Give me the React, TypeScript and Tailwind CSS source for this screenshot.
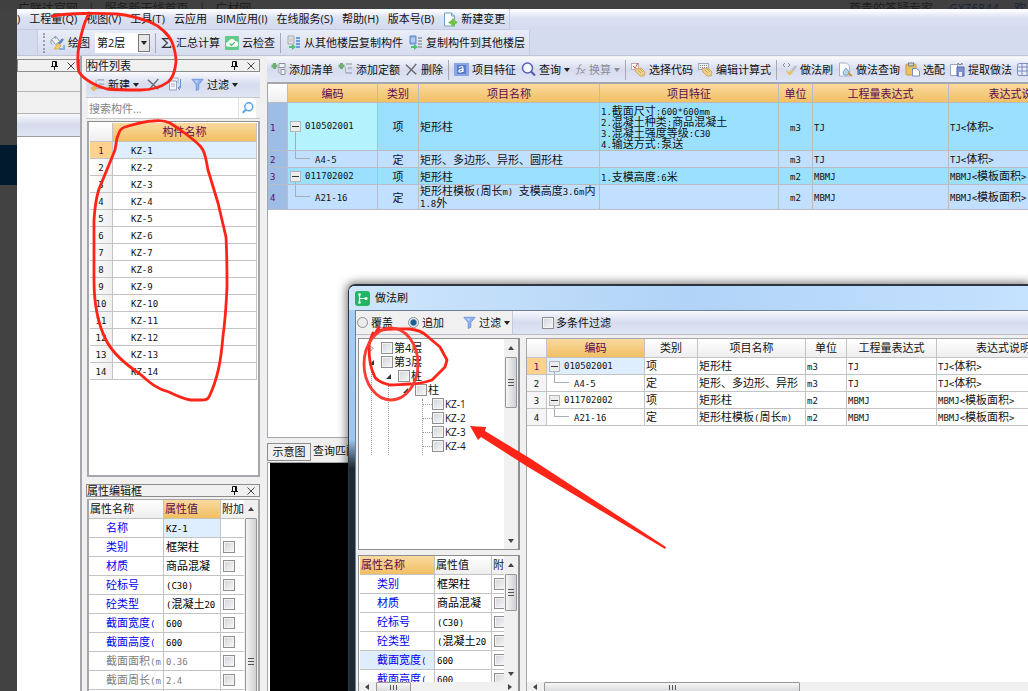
import { Fragment, type ReactNode } from "react";
import clsx from "clsx";

const KZ_ROWS = Array.from({ length: 14 }, (_, i) => `KZ-${i + 1}`);

interface Item {
  no: number;
  code: string;
  kind: string;
  name: string;
  shortName: string;
  feature: string[];
  unit: string;
  expr: string;
  note: string;
  parent: boolean;
}

const ITEMS: Item[] = [
  {
    no: 1,
    code: "010502001",
    kind: "项",
    name: "矩形柱",
    shortName: "矩形柱",
    feature: ["1.截面尺寸:600*600mm", "2.混凝土种类:商品混凝土", "3.混凝土强度等级:C30", "4.输送方式:泵送"],
    unit: "m3",
    expr: "TJ",
    note: "TJ<体积>",
    parent: true,
  },
  {
    no: 2,
    code: "A4-5",
    kind: "定",
    name: "矩形、多边形、异形、圆形柱",
    shortName: "矩形、多边形、异形",
    feature: [],
    unit: "m3",
    expr: "TJ",
    note: "TJ<体积>",
    parent: false,
  },
  {
    no: 3,
    code: "011702002",
    kind: "项",
    name: "矩形柱",
    shortName: "矩形柱",
    feature: ["1.支模高度:6米"],
    unit: "m2",
    expr: "MBMJ",
    note: "MBMJ<模板面积>",
    parent: true,
  },
  {
    no: 4,
    code: "A21-16",
    kind: "定",
    name: "矩形柱模板(周长m) 支模高度3.6m内1.8外",
    shortName: "矩形柱模板(周长m)",
    feature: [],
    unit: "m2",
    expr: "MBMJ",
    note: "MBMJ<模板面积>",
    parent: false,
  },
];

const PROPS = [
  { label: "名称", value: "KZ-1", own: true },
  { label: "类别", value: "框架柱", own: true },
  { label: "材质", value: "商品混凝", own: true },
  { label: "砼标号", value: "(C30)", own: true },
  { label: "砼类型", value: "(混凝土20", own: true },
  { label: "截面宽度(", value: "600", own: true },
  { label: "截面高度(", value: "600", own: true },
  { label: "截面面积(m", value: "0.36", own: false },
  { label: "截面周长(m", value: "2.4", own: false },
];

const TREE = [
  { label: "第4层", level: 0, state: "closed" },
  { label: "第3层", level: 0, state: "open" },
  { label: "柱", level: 1, state: "open" },
  { label: "柱", level: 2, state: "open" },
  { label: "KZ-1", level: 3, state: "leaf" },
  { label: "KZ-2", level: 3, state: "leaf" },
  { label: "KZ-3", level: 3, state: "leaf" },
  { label: "KZ-4", level: 3, state: "leaf" },
];

const ORANGE = "bg-linear-to-b from-[#f9d99e] to-[#f1bf62] text-[#5c0a52]";
const GREY_HEAD = "bg-linear-to-b from-white to-[#eeeeee] text-[#111111]";
const BAR = "bg-linear-to-b from-[#f8f9fd] via-[#d6dcee] to-[#e0e5f4]";

// half-width characters sit in a mono face, the Chinese ones in the UI face
function Mixed({ text }: { text: string }) {
  return (
    <>
      {text.split(/([\x20-\x7e]+)/).map((part, i) =>
        i % 2 ? (
          <span key={i} className="font-['DejaVu_Sans_Mono',monospace] text-[9px] leading-none">
            {part}
          </span>
        ) : (
          <Fragment key={i}>{part}</Fragment>
        )
      )}
    </>
  );
}

function Check({ label, className }: { label: string; className?: string }) {
  return (
    <input
      type="checkbox"
      aria-label={label}
      className={clsx(
        "block w-3 h-3 shrink-0 appearance-none border border-[#8e8f8f] bg-linear-to-br from-[#cfd3d8] to-[#f8f8f8] shadow-[inset_0_0_0_1px_#f4f4f4]",
        className
      )}
    />
  );
}

function Icon({ children, size = 15 }: { children: ReactNode; size?: number }) {
  return (
    <svg width={size} height={size} viewBox="0 0 15 15" fill="none" className="shrink-0">
      {children}
    </svg>
  );
}

function Caret({ className = "text-[#222222]" }: { className?: string }) {
  return (
    <svg width="6" height="4" viewBox="0 0 6 4" className={clsx("shrink-0", className)}>
      <path d="M0 0h6L3 4z" fill="currentColor" />
    </svg>
  );
}

function Sep() {
  return <span className="w-px h-5 shrink-0 bg-[#a5a9b5]" />;
}

const BrushIcon = () => (
  <Icon>
    <path d="M1.500 4.500L6 1.500l4 5-4.500 3z" fill="#eef1f7" stroke="#8b98ae" />
    <path d="M2 4.500c-2 1-1 4 0 5M5 1l1 3" stroke="#8b98ae" />
    <path d="M13 4L9 9" stroke="#5d88c4" strokeWidth="2.500" />
    <path d="M8 8.500l3 2.500-3 3-4 0z" fill="#f1cf6c" stroke="#d9b04f" />
    <path d="M9 14h5v-4" stroke="#8db0e0" strokeWidth="2" />
  </Icon>
);
const CloudIcon = () => (
  <Icon size={14}>
    <rect width="15" height="15" rx="1" fill="#63c98c" />
    <path d="M3.500 11.500a2.500 2.500 0 0 1 0-5 4 4 0 0 1 7.500-1 3 3 0 0 1 .5 6z" fill="#fff" />
    <path d="M5 8l2 2 3.500-3.500" stroke="#45b877" strokeWidth="1.300" />
  </Icon>
);
const CopyFloorIcon = ({ flip = false }: { flip?: boolean }) => (
  <Icon>
    <path d="M2 1h6v8H2z" fill={flip ? "#8fb2e8" : "#e4e4e0"} stroke={flip ? "#5e87cc" : "#a4a8ae"} />
    <path d="M3 4h4M3 6h4" stroke={flip ? "#dce8fb" : "#b9bec6"} />
    <path d="M10 3h4M10 6h4M10 9h4M10 12h4" stroke={flip ? "#a5abb5" : "#6a9ae0"} strokeWidth="2" />
    <path d="M3 9v2h3v-2l4 3-4 3v-2H3z" fill="#4ec26f" />
  </Icon>
);
const NewDocIcon = () => (
  <Icon>
    <path d="M1.500 1h7l3 3v10h-10z" fill="#fbfdff" stroke="#6f9fc4" />
    <path d="M8.500 1v3h3" stroke="#6f9fc4" />
    <path d="M10 6l2 2.500 3 2-3 2-2 2.500-2-2.500-3-2 3-2z" fill="#72c24a" />
  </Icon>
);
const AddListIcon = ({ tight = false }: { tight?: boolean }) => (
  <Icon>
    <path d="M3.500 1v6M.5 4h6" stroke="#6fae74" strokeWidth="3" />
    <path d={tight ? "M8 2h6M10 6h4M8 11h6" : "M8 1.500h6v4H8zM10 7.500h4v5h-4z"} stroke="#8d939d" fill={tight ? "none" : "#f1f3f7"} />
    <path d="M7.500 5v6h2" stroke="#aab0bb" />
  </Icon>
);
const CrossIcon = () => (
  <Icon size={13}>
    <path d="M1 2l12 11M13 1L2 14" stroke="#666a70" strokeWidth="1.700" />
  </Icon>
);
const FeatureIcon = () => (
  <Icon>
    <rect y="1" width="15" height="13" fill="#86a8ea" />
    <rect x="3" y="3" width="9" height="9" fill="#5b7cc4" />
    <path d="M5 6c1-2 4-2 4 0v4M9 7.500c-5-.5-5 3-2.500 2.500 1 0 2-1 2.500-1.500" stroke="#fff" strokeWidth="1.200" />
  </Icon>
);
const SearchIcon = ({ stroke = "#5a5fb5" }: { stroke?: string }) => (
  <Icon>
    <circle cx="6.500" cy="6" r="5" fill="#f4f8ff" stroke={stroke} strokeWidth="1.500" />
    <path d="M10 9.500l4 4" stroke={stroke} strokeWidth="2.200" />
  </Icon>
);
const FxIcon = () => (
  <Icon size={11}>
    <path d="M9 1C5 0 6 5 4 13c0 1-2 1-3 0M2 6h6M8 7l5 6M14 7l-7 6" stroke="#9a9da5" strokeWidth="1.400" />
  </Icon>
);
const HandIcon = ({ grid = false }: { grid?: boolean }) => (
  <Icon>
    {grid ? (
      <>
        <rect x=".5" y="1.500" width="10" height="6" fill="#eef0f4" stroke="#a3a8b2" />
        <path d="M2 3.500h7M2 5.500h7" stroke="#7f8794" strokeDasharray="1 1" />
      </>
    ) : (
      <>
        <rect x=".5" y="1.500" width="7" height="6" fill="#fff" stroke="#b5aeb4" />
        <path d="M2 4l2 2 3-5" stroke="#e0453a" />
      </>
    )}
    <path d="M4 6l3 1 3-1 4 4-1 4H9L5 10z" fill="#edd08c" stroke="#cfa860" />
    <path d="M7 8l3 3M9 7l3 3" stroke="#cfa860" />
  </Icon>
);
const RecipeBrushIcon = () => (
  <Icon>
    <path d="M3 1L1 3l2 2M6 1l2 2-2 2" stroke="#8b8e96" />
    <path d="M14 4l-4 5" stroke="#b7bcc6" strokeWidth="2.500" />
    <path d="M4 8l3 2 3-2.500 1.500 2L8 13.500C6 13 5 11 4 8z" fill="#e8c061" />
  </Icon>
);
const RecipeSearchIcon = () => (
  <Icon>
    <path d="M1.500 1h7l3 3v10h-10z" fill="#fbfcff" stroke="#a8b2c4" />
    <path d="M5 10l3-4 3 4-1 3H6z" fill="#b9d6ee" stroke="#7ca0c0" />
    <path d="M10 11l4 3" stroke="#c99446" strokeWidth="2" />
  </Icon>
);
const PasteIcon = () => (
  <Icon>
    <rect x="1" y="2" width="10" height="11" rx="1" fill="#edc35c" stroke="#c99a3c" />
    <rect x="3.500" y="1" width="5" height="3" fill="#c9ced8" stroke="#7b818d" />
    <path d="M7.500 6.500h4l3 2.500v5h-7z" fill="#fff" stroke="#7490bd" />
  </Icon>
);
const ExtractIcon = () => (
  <Icon>
    <path d="M.5 2.500h7v11h-7z" fill="#fff" stroke="#98a5bd" />
    <path d="M7 5h7v9H7z" fill="#7d92cf" stroke="#5269ad" />
    <path d="M9 10h3v4H9z" fill="#e7ecf8" />
    <path d="M8 3V1l2 2 2-2v2" stroke="#747a86" />
  </Icon>
);
const GridIcon = () => (
  <Icon>
    <rect x=".5" y="1.500" width="14" height="12" rx="2" fill="#e8edfa" stroke="#7b8bc0" />
    <path d="M1 5h14M1 9h14M5 1v13M10 1v13" stroke="#7b8bc0" />
  </Icon>
);
const NewItemIcon = () => (
  <Icon size={14}>
    <path d="M7 2h7M8 6.500h6M7 11h7" stroke="#9aa6bd" strokeWidth="1.300" />
    <path d="M5.500 2v9h2" stroke="#9aa6bd" />
    <path d="M3 8v6M0 11h6" stroke="#e0b556" strokeWidth="2.500" />
  </Icon>
);
const DuplicateIcon = () => (
  <Icon>
    <path d="M5 1h5v5M1.500 4h7v9h-7z" fill="#f3f5fa" stroke="#98a3b8" />
    <path d="M3 7h4M3 9h4" stroke="#aab4c8" />
    <path d="M12.500 2v9h-2M12 9l-2 2 2 2" stroke="#6f8fd0" />
  </Icon>
);
const FilterIcon = () => (
  <Icon size={13}>
    <path d="M1 1.500h13L9 7.500V13l-3 1.500v-7z" fill="#8fb2f2" stroke="#6a92dc" />
    <path d="M3.500 3h5L7 6z" fill="#c3d7fb" />
  </Icon>
);

function ToolButton({ icon, label, caret = false, disabled = false }: { icon?: ReactNode; label: string; caret?: boolean; disabled?: boolean }) {
  return (
    <button disabled={disabled} className={clsx("flex items-center gap-[3px] shrink-0 whitespace-nowrap", disabled && "text-[#8b8e96]")}>
      {icon}
      {label}
      {caret && <Caret className={disabled ? "text-[#8b8e96]" : "text-[#222222]"} />}
    </button>
  );
}

function PanelTitle({ title }: { title?: string }) {
  return (
    <div className="h-[13px] shrink-0 flex items-center justify-between border border-[#8c8c8c] bg-[#f0f0f0] pr-1 leading-[11px]">
      <h2>{title}</h2>
      <div className="flex items-center gap-[9px]">
        <button aria-label="固定">
          <svg width="7" height="9" viewBox="0 0 7 9" className="block">
            <path d="M1.500 5V.5h4V5M0 5.500h7M3.500 6v3" stroke="#111" fill="none" />
            <path d="M4.500 1v4" stroke="#111" />
          </svg>
        </button>
        <button aria-label="关闭">
          <svg width="8" height="8" viewBox="0 0 8 8" className="block">
            <path d="M.5.5l7 7M7.500.5l-7 7" stroke="#444" />
          </svg>
        </button>
      </div>
    </div>
  );
}

function ScrollY({ thumb, bottomArrow = true }: { thumb: string; bottomArrow?: boolean }) {
  return (
    <div className="w-[14px] shrink-0 flex flex-col items-center bg-[#f0f0f0] pt-[7px] pb-[6px]">
      <svg width="6" height="4" viewBox="0 0 6 4" className="shrink-0">
        <path d="M0 4h6L3 0z" fill="#444" />
      </svg>
      <div className={clsx("mt-[7px] w-3 flex flex-col items-center justify-center gap-px border border-[#979797] rounded-[1px] bg-linear-to-r from-[#f5f5f5] to-[#cfd0d3]", thumb)}>
        <i className="w-[6px] h-px bg-[#555555]" />
        <i className="w-[6px] h-px mt-px bg-[#555555]" />
        <i className="w-[6px] h-px mt-px bg-[#555555]" />
      </div>
      {bottomArrow && (
        <>
          <span className="flex-1" />
          <Caret className="text-[#444444]" />
        </>
      )}
    </div>
  );
}

function ScrollX({ thumb, rightArrow = false }: { thumb: string; rightArrow?: boolean }) {
  return (
    <div className="h-[9px] shrink-0 flex items-center bg-[#f0f0f0] px-[6px] overflow-hidden">
      <svg width="4" height="6" viewBox="0 0 4 6" className="shrink-0">
        <path d="M4 0v6L0 3z" fill="#444" />
      </svg>
      <div className={clsx("ml-[7px] h-3 mt-[2px] shrink-0 flex items-center justify-center gap-[2px] border border-[#979797] rounded-[1px] bg-linear-to-b from-[#f5f5f5] to-[#d5d6d9]", thumb)}>
        <i className="h-[5px] w-px bg-[#555555]" />
        <i className="h-[5px] w-px bg-[#555555]" />
        <i className="h-[5px] w-px bg-[#555555]" />
      </div>
      {rightArrow && (
        <svg width="4" height="6" viewBox="0 0 4 6" className="ml-auto shrink-0">
          <path d="M0 0v6l4-3z" fill="#444" />
        </svg>
      )}
    </div>
  );
}

// branch lines run from the fold box down through the cell edge to the child code
function CodeCell({ item, className }: { item: Item; className?: string }) {
  return (
    <td className={clsx("relative border-r border-b", className)}>
      {item.parent ? (
        <>
          <span className="absolute left-[7px] top-1/2 bottom-0 w-px bg-[#a5adb5]" />
          <div className="relative flex items-center gap-1 pl-[2px]">
            <button aria-label="收起" className="w-[11px] h-[11px] shrink-0 border border-[#b5b5b5] bg-[#ececec] flex items-center justify-center">
              <i className="w-[7px] h-px bg-[#333333]" />
            </button>
            <Mixed text={item.code} />
          </div>
        </>
      ) : (
        <>
          <span className="absolute left-[7px] top-0 bottom-1/2 w-[15px] border-l border-b border-[#a5adb5]" />
          <div className="pl-[27px]">
            <Mixed text={item.code} />
          </div>
        </>
      )}
    </td>
  );
}

function PropertyTable({ rows, active, head, name }: { rows: typeof PROPS; active: string; head: "label" | "value"; name: string }) {
  return (
    <table className="w-full table-fixed border-separate border-spacing-0 whitespace-nowrap leading-3">
      <colgroup>
        <col className="w-[75px]" />
        <col className="w-[57px]" />
        <col />
      </colgroup>
      <thead>
        <tr>
          {["属性名称", "属性值", "附加"].map((h, i) => (
            <th
              key={h}
              className={clsx(
                "h-[19px] border-b border-[#c3c3c3] pl-px text-left font-normal overflow-hidden",
                i < 2 && "border-r",
                (head === "label" ? 0 : 1) === i ? ORANGE : GREY_HEAD
              )}
            >
              {h}
            </th>
          ))}
        </tr>
      </thead>
      <tbody>
        {rows.map((p) => (
          <tr key={p.label} className={p.own ? "text-black" : "text-[#7d7d7d]"}>
            <td className={clsx("h-[19px] border-r border-b border-[#c3c3c3] pl-[17px] overflow-hidden", p.own && "text-[#0000f0]", head === "label" && active === p.label && "bg-[#dfeeff]")}>
              <Mixed text={p.label} />
            </td>
            <td className={clsx("border-r border-b border-[#c3c3c3] pl-[2px] overflow-hidden", head === "value" && active === p.label && "bg-[#dfeeff]")}>
              <Mixed text={p.value} />
            </td>
            <td className="border-b border-[#c3c3c3] pl-[2px] overflow-hidden">{p.label !== "名称" && <Check label={`${name} ${p.label}`} />}</td>
          </tr>
        ))}
        <tr>
          <td className="h-[19px] border-r border-[#c3c3c3]" />
          <td className="border-r border-[#c3c3c3]" />
          <td />
        </tr>
      </tbody>
    </table>
  );
}

function ComponentPanel() {
  return (
    <section className="w-[174px] shrink-0 flex flex-col pt-[3px]">
      <PanelTitle title="构件列表" />
      <div className={clsx("h-[25px] shrink-0 flex items-center gap-2 pl-[5px]", BAR)}>
        <ToolButton icon={<NewItemIcon />} label="新建" caret />
        <button aria-label="删除">
          <CrossIcon />
        </button>
        <button aria-label="复制">
          <DuplicateIcon />
        </button>
        <ToolButton icon={<FilterIcon />} label="过滤" caret />
      </div>
      <div className="h-[22px] shrink-0 flex items-center bg-[#f0f0f0] pl-[2px] pr-1 border-y border-[#c9c9c9]">
        <input
          aria-label="搜索构件"
          placeholder="搜索构件..."
          className="w-[151px] h-full bg-white border-r border-[#e2e2e2] px-px placeholder:text-[#858585] outline-none"
        />
        <button aria-label="搜索" className="flex-1 h-full bg-white flex items-center justify-center">
          <svg width="12" height="12" viewBox="0 0 15 15" fill="none">
            <circle cx="8.500" cy="6" r="5" fill="#f4f8ff" stroke="#5aa2e8" strokeWidth="1.800" />
            <path d="M5 9.500l-4 4" stroke="#5aa2e8" strokeWidth="2.500" />
          </svg>
        </button>
      </div>
      <div className="mt-[2px] ml-px flex-1 min-h-0 overflow-hidden border-2 border-[#a5a7ac] border-t-[#8c8c8c] border-t bg-white pl-px pr-px pt-px">
        <table className="w-full table-fixed border-separate border-spacing-0 leading-3">
          <colgroup>
            <col className="w-[23px]" />
            <col />
          </colgroup>
          <thead>
            <tr>
              <th className={clsx("h-[19px] border-r border-b border-[#c3c3c3]", GREY_HEAD)} />
              <th className={clsx("border-r border-b border-[#c3c3c3] font-normal", ORANGE)}>构件名称</th>
            </tr>
          </thead>
          <tbody>
            {KZ_ROWS.map((name, i) => (
              <tr key={name}>
                <td className={clsx("h-[17px] border-r border-b border-[#c3c3c3] text-center", i === 0 ? "bg-[#fdd28c] text-[#5c0a52]" : "bg-linear-to-r from-white to-[#efefef]")}>
                  <Mixed text={String(i + 1)} />
                </td>
                <td className={clsx("border-r border-b border-[#c3c3c3] pl-[18px]", i === 0 && "bg-[#dfeeff]")}>
                  <Mixed text={name} />
                </td>
              </tr>
            ))}
          </tbody>
        </table>
      </div>
      <div className="h-[214px] shrink-0 flex flex-col pt-[7px]">
        <PanelTitle title="属性编辑框" />
        <div className="mt-[2px] ml-px flex-1 min-h-0 flex overflow-hidden border-l-2 border-t border-r-2 border-[#a5a7ac] bg-white">
          <div className="flex-1 min-w-0 overflow-hidden">
            <PropertyTable rows={PROPS} active="名称" head="value" name="构件" />
          </div>
          <ScrollY thumb="h-[286px] shrink-0" bottomArrow={false} />
        </div>
      </div>
    </section>
  );
}

function ItemTable() {
  const cell = "border-r border-b border-[#b9bcc2]";
  return (
    <table className="w-[816px] table-fixed border-separate border-spacing-0 leading-[11px]">
      <colgroup>
        <col className="w-5" />
        <col className="w-[90px]" />
        <col className="w-[41px]" />
        <col className="w-[181px]" />
        <col className="w-[179px]" />
        <col className="w-[34px]" />
        <col className="w-[136px]" />
        <col />
      </colgroup>
      <thead>
        <tr>
          <th className={clsx("h-[19px]", cell, GREY_HEAD)} />
          {["编码", "类别", "项目名称", "项目特征", "单位", "工程量表达式", "表达式说明"].map((h) => (
            <th key={h} className={clsx(cell, "font-normal", ORANGE)}>
              {h}
            </th>
          ))}
        </tr>
      </thead>
      <tbody>
        {ITEMS.map((item) => (
          <tr key={item.no} className={item.parent ? "bg-[#9ce0ff]" : "bg-[#c1dfff]"}>
            <td className={clsx("bg-[#9dbde5] text-[#5c0a72] pl-[2px]", cell, { 1: "h-12", 2: "h-[17px]", 3: "h-[17px]", 4: "h-[25px]" }[item.no])}>
              <Mixed text={String(item.no)} />
            </td>
            <CodeCell item={item} className={clsx("border-[#b9bcc2]", item.no === 1 && "bg-[#b4f2fd]")} />
            <td className={clsx(cell, "text-center")}>{item.kind}</td>
            <td className={clsx(cell, "pl-px")}>
              <Mixed text={item.name} />
            </td>
            <td className={clsx(cell, "pl-px")}>
              {item.feature.map((line) => (
                <div key={line} className="h-[11px]">
                  <Mixed text={line} />
                </div>
              ))}
            </td>
            <td className={clsx(cell, "text-center")}>
              <Mixed text={item.unit} />
            </td>
            <td className={clsx(cell, "pl-px")}>
              <Mixed text={item.expr} />
            </td>
            <td className={clsx(cell, "pl-px")}>
              <Mixed text={item.note} />
            </td>
          </tr>
        ))}
      </tbody>
    </table>
  );
}

function Workspace() {
  return (
    <section className="flex-1 min-w-0 flex flex-col pt-px">
      <div className={clsx("h-[25px] shrink-0 flex items-center gap-[5px] pl-1 overflow-hidden", BAR)}>
        <ToolButton icon={<AddListIcon />} label="添加清单" />
        <ToolButton icon={<AddListIcon tight />} label="添加定额" />
        <ToolButton icon={<CrossIcon />} label="删除" />
        <Sep />
        <ToolButton icon={<FeatureIcon />} label="项目特征" />
        <ToolButton icon={<SearchIcon />} label="查询" caret />
        <ToolButton icon={<FxIcon />} label="换算" caret disabled />
        <Sep />
        <ToolButton icon={<HandIcon />} label="选择代码" />
        <ToolButton icon={<HandIcon grid />} label="编辑计算式" />
        <Sep />
        <ToolButton icon={<RecipeBrushIcon />} label="做法刷" />
        <ToolButton icon={<RecipeSearchIcon />} label="做法查询" />
        <ToolButton icon={<PasteIcon />} label="选配" />
        <ToolButton icon={<ExtractIcon />} label="提取做法" />
        <button aria-label="表格">
          <GridIcon />
        </button>
      </div>
      <div className="flex-1 min-h-0 overflow-hidden border-l border-t-2 border-b border-[#a5a7ac] bg-white">
        <ItemTable />
      </div>
      <div className="h-[253px] shrink-0 flex flex-col pt-[5px]">
        <div className="flex h-[19px] shrink-0">
          <button className="w-[44px] h-[18px] border border-[#8c8c8c] bg-[#f0f0f0]">示意图</button>
          <button className="px-[2px] pb-1 whitespace-nowrap">查询匹配</button>
        </div>
        <div className="flex-1 border-l border-t border-[#a5a7ac] bg-white pl-[2px]">
          <div className="h-full bg-black" />
        </div>
      </div>
    </section>
  );
}

function TreePane() {
  return (
    <div className="flex-1 min-h-0 flex border border-[#8c8f94] border-r-2 bg-white">
      <ul className="relative flex-1 pt-[2px] pl-[9px]">
        <li aria-hidden className="absolute left-3 top-[30px] h-[86px] border-l border-dotted border-[#999999]" />
        <li aria-hidden className="absolute left-[29px] top-[46px] h-[70px] border-l border-dotted border-[#999999]" />
        <li aria-hidden className="absolute left-[63px] top-[60px] h-[56px] border-l border-dotted border-[#999999]" />
        {TREE.map((node, i) => (
          <li
            key={i}
            className={clsx("flex items-center h-[14px] leading-[14px]", { 0: "pl-0", 1: "pl-[17px]", 2: "pl-[34px]", 3: "pl-[51px]" }[node.level])}
          >
            <span className="w-[13px] flex items-center shrink-0">
              {node.state === "leaf" ? (
                <i className="w-[9px] ml-1 border-t border-dotted border-[#999999]" />
              ) : (
                <svg width="7" height="7" viewBox="0 0 7 7">
                  {node.state === "open" ? <path d="M6 1v5H1z" fill="#333" /> : <path d="M2 .5l3 3-3 3z" stroke="#888" fill="none" />}
                </svg>
              )}
            </span>
            <label className="flex items-center gap-px">
              <Check label={node.label} />
              <span className={node.state === "leaf" ? "text-[10px]" : ""}>{node.label}</span>
            </label>
          </li>
        ))}
      </ul>
      <ScrollY thumb="h-[51px]" />
    </div>
  );
}

function BrushDialog() {
  const cell = "border-r border-b border-[#c3c3c3]";
  return (
    <div
      role="dialog"
      aria-label="做法刷"
      className="absolute left-[348px] top-[284px] right-0 bottom-0 flex flex-col rounded-tl-[7px] border-t-2 border-l border-[#2c3540] bg-linear-to-b from-[#a9d0f5] from-0% via-[#9cc6ee] via-38% to-[#1d2a31] to-45% pl-[6px] shadow-[0_0_9px_2px_rgba(0,0,0,0.5)] overflow-hidden"
    >
      <div className="h-6 -ml-[6px] pl-[6px] shrink-0 flex items-center gap-[5px] bg-linear-to-r from-[#cfe6fb] via-[#b0d3f7] to-[#c5e2ff]">
        <Icon>
          <rect width="15" height="15" rx="3" fill="#22b565" />
          <path d="M4.500 3v9M4.500 7.500H11" stroke="#fff" strokeWidth="1.200" />
          <circle cx="4.500" cy="3.500" r="1.300" fill="#fff" />
          <circle cx="4.500" cy="11.500" r="1.300" fill="#fff" />
          <circle cx="11" cy="7.500" r="1.500" fill="#fff" />
        </Icon>
        <h2>做法刷</h2>
      </div>
      <div className="flex-1 min-h-0 flex flex-col border-t border-l border-[#6b7f95] bg-[#f0f0f0]">
        <div className="h-6 shrink-0 flex border-b border-[#b9bdc9]">
          <div className="w-[157px] shrink-0 flex items-center bg-[#f0f0f0] pl-px border-r border-[#c5cada]">
            <label className="flex items-center gap-[3px]">
              <input type="radio" name="mode" className="w-[11px] h-[11px] appearance-none rounded-full border border-[#8e8f8f] bg-[#ececec]" />
              覆盖
            </label>
            <label className="ml-[15px] flex items-center gap-[3px]">
              <input
                type="radio"
                name="mode"
                defaultChecked
                className="w-[11px] h-[11px] appearance-none rounded-full border border-[#8e8f8f] bg-radial from-[#1c5f93] from-40% to-[#e8f2f8] to-60%"
              />
              追加
            </label>
            <span className="ml-[19px]">
              <ToolButton icon={<FilterIcon />} label="过滤" caret />
            </span>
          </div>
          <div className={clsx("flex-1 flex items-center pl-[29px]", BAR)}>
            <label className="flex items-center gap-[2px]">
              <Check label="多条件过滤" />
              多条件过滤
            </label>
          </div>
        </div>
        <div className="flex-1 min-h-0 flex pt-[3px]">
          <div className="w-[164px] shrink-0 flex flex-col pl-[2px]">
            <TreePane />
            <div className="mt-[5px] h-[136px] shrink-0 flex flex-col border-l border-t border-r-2 border-[#8c8f94] bg-white">
              <div className="flex-1 min-h-0 flex overflow-hidden pl-px">
                <div className="flex-1 min-w-0 overflow-hidden">
                  <PropertyTable rows={PROPS.slice(1)} active="截面宽度(" head="label" name="做法刷" />
                </div>
                <ScrollY thumb="h-[37px] shrink-0" />
              </div>
              <ScrollX thumb="w-[35px]" rightArrow />
            </div>
          </div>
          <div className="ml-[6px] flex-1 min-w-0 flex flex-col border-l border-t border-[#a5a7ac] bg-white">
            <div className="flex-1 min-h-0 overflow-hidden">
              <table className="w-[544px] table-fixed border-separate border-spacing-0 leading-3 whitespace-nowrap">
                <colgroup>
                  <col className="w-5" />
                  <col className="w-[98px]" />
                  <col className="w-[53px]" />
                  <col className="w-[108px]" />
                  <col className="w-[41px]" />
                  <col className="w-[90px]" />
                  <col />
                </colgroup>
                <thead>
                  <tr>
                    <th className={clsx("h-[19px]", cell, GREY_HEAD)} />
                    {["编码", "类别", "项目名称", "单位", "工程量表达式", "表达式说明"].map((h, i) => (
                      <th key={h} className={clsx(cell, "font-normal", i === 0 ? ORANGE : GREY_HEAD)}>
                        {h}
                      </th>
                    ))}
                  </tr>
                </thead>
                <tbody>
                  {ITEMS.map((item) => (
                    <tr key={item.no}>
                      <td className={clsx(cell, "h-[17px] text-center", item.no === 1 ? "bg-[#fdd28c] text-[#5c0a52]" : "bg-[#f5f5f5]")}>
                        <Mixed text={String(item.no)} />
                      </td>
                      <CodeCell item={item} className={clsx("border-[#c3c3c3]", item.no === 1 && "bg-[#dfeeff]")} />
                      <td className={clsx(cell, "pl-px")}>{item.kind}</td>
                      <td className={clsx(cell, "pl-px")}>
                        <Mixed text={item.shortName} />
                      </td>
                      <td className={clsx(cell, "pl-px")}>
                        <Mixed text={item.unit} />
                      </td>
                      <td className={clsx(cell, "pl-px")}>
                        <Mixed text={item.expr} />
                      </td>
                      <td className={clsx(cell, "pl-px")}>
                        <Mixed text={item.note} />
                      </td>
                    </tr>
                  ))}
                </tbody>
              </table>
            </div>
            <ScrollX thumb="w-[256px]" />
          </div>
        </div>
      </div>
    </div>
  );
}

// red pen marks over the whole window
function Marks() {
  return (
    <svg width="1028" height="691" viewBox="0 0 1028 691" fill="none" className="absolute left-0 top-0 pointer-events-none">
      <g stroke="#ff2418" strokeWidth="2.800" strokeLinejoin="round" strokeLinecap="round">
        <path d="M52 16C70 13 100 13 117 14C128 15 142 19 150 22C160 26 169 35 172 42C175 50 176 56 176 62C175 72 173 78 168 82C160 88 150 90 140 90C128 90 115 90 107 89C98 87 84 80 79 72C77 66 78 58 78 53C79 42 83 28 85 22L89 13" />
        <path d="M119 133C120 129 122 128 125 127C135 124 146 121 153 121C160 120 166 121 170 123C178 128 195 140 201 147C206 153 206 161 208 170L218 203L226 237C227 255 227 272 227 287C226 310 225 322 223 336C221 360 218 378 209 397C207 400 205 400 201 400H191C184 399 177 396 169 392C156 389 148 381 140 374C125 364 112 352 106 340C97 322 94 300 94 280V220C95 205 97 195 99 189L106 172L115 150L117 138Z" />
        <path d="M375 334L379 327L377 331C388 328 402 329 410 329C418 330 423 332 427 336L440 347L447 360L445 367L432 380C426 382 419 384 410 384C402 384 397 385 390 385C382 383 375 380 374 375C370 367 369 357 369 347C369 342 371 338 373 333" />
      </g>
      <ellipse cx="391" cy="364" rx="27" ry="36" stroke="#fb3c33" strokeWidth="2.800" />
      <path d="M470 426L486 427L485 431L531 459L666 547L665 549L528 467L481 437L478 440Z" fill="#ff2418" />
    </svg>
  );
}

export default function App() {
  return (
    <div className="relative h-screen flex flex-col overflow-hidden bg-[#f0f0f0] font-['Open_Sans','Noto_Sans_CJK_SC',sans-serif] text-[11px] leading-[14px] text-[#111111]">
      <header className="h-[9px] shrink-0 overflow-hidden flex items-start whitespace-nowrap bg-[#404040] pl-[18px] text-xs leading-4 pt-px text-[#1e1e1e]">
        <a href="#">广联达官网</a>
        <span className="mx-[10px]">|</span>
        <a href="#">服务新干线首页</a>
        <span className="mx-[10px]">|</span>
        <a href="#">广材网</a>
        <span className="ml-auto">尊贵的答疑专家</span>
        <a href="#" className="ml-4 mr-3 text-[#17263c]">
          GXZ6844,
        </a>
        <span className="w-[14px] text-[#17263c]">欢</span>
      </header>
      <div className="flex-1 min-h-0 flex">
        <aside className="w-[17px] shrink-0 bg-[#424242] pt-[136px]">
          <div className="h-10 bg-[#021a2e]" />
        </aside>
        <main className="flex-1 min-w-0 flex flex-col">
          <nav className="h-[21px] shrink-0 flex bg-linear-to-b from-[#fafbfe] from-10% via-[#dce2f2] via-40% to-[#d4daed] whitespace-nowrap">
            <div className="flex items-center gap-[9px] pr-1 border-r border-b border-[#c6cce0]">
              <span>)</span>
              {["工程量(Q)", "视图(V)", "工具(T)", "云应用", "BIM应用(I)", "在线服务(S)", "帮助(H)", "版本号(B)"].map((m) => (
                <button key={m}>{m}</button>
              ))}
              <ToolButton icon={<NewDocIcon />} label="新建变更" />
            </div>
          </nav>
          <div className="h-[26px] shrink-0 flex bg-[#d5dbee] border-b border-[#bfc5d6] pl-5">
            <div className="flex items-center gap-[5px] border-x border-[#c6cce0] bg-linear-to-b from-[#e9edf8] to-[#d6dcee] pl-[5px] pr-1">
              <span className="h-5 border-l-2 border-dotted border-[#9aa0b2]" />
              <ToolButton icon={<BrushIcon />} label="绘图" />
              <span className="relative w-[55px] h-5">
                <select aria-label="楼层" className="w-full h-full appearance-none bg-white pl-[2px] outline-none">
                  <option>第2层</option>
                  <option>第3层</option>
                  <option>第4层</option>
                </select>
                <span className="absolute right-0 top-px bottom-px w-3 flex items-center justify-center border border-[#777777] bg-[#e6e6e6] pointer-events-none">
                  <Caret />
                </span>
              </span>
              <Sep />
              <ToolButton
                icon={
                  <Icon size={12}>
                    <path d="M12 4V2H2l6 5.500L2 13h10v-2" stroke="#333" strokeWidth="1.500" />
                  </Icon>
                }
                label="汇总计算"
              />
              <ToolButton icon={<CloudIcon />} label="云检查" />
              <Sep />
              <ToolButton icon={<CopyFloorIcon />} label="从其他楼层复制构件" />
              <ToolButton icon={<CopyFloorIcon flip />} label="复制构件到其他楼层" />
            </div>
          </div>
          <div className="flex-1 min-h-0 flex">
            <section className="w-[65px] shrink-0 flex flex-col pt-[3px] border-r-2 border-[#a5a7ac]">
              <PanelTitle />
              <div className="h-5 shrink-0 border-b border-[#b5b5b5]" />
              <div className="h-[22px] shrink-0 border-b border-[#b5b5b5]" />
              <div className={clsx("h-[23px] shrink-0 border-b border-[#9a9ca4]", BAR)} />
              <div className="flex-1 bg-white" />
            </section>
            <div className="w-1 shrink-0" />
            <ComponentPanel />
            <div className="w-[7px] shrink-0" />
            <Workspace />
          </div>
        </main>
      </div>
      <BrushDialog />
      <Marks />
    </div>
  );
}
